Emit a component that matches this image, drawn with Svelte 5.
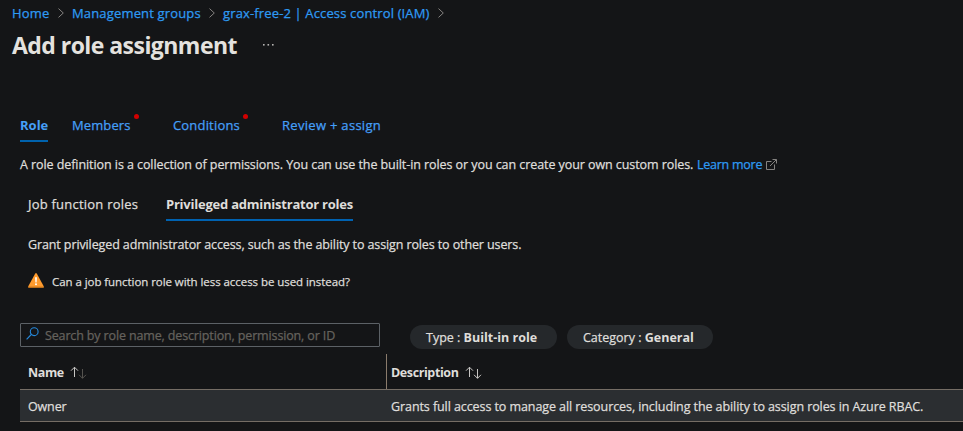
<script>
  const crumbs = [
    { label: 'Home', width: 38 },
    { label: 'Management groups', width: 129 },
    { label: 'grax-free-2 | Access control (IAM)', width: 207 }
  ];
</script>

{#snippet sort(dim)}
  <svg class="sort" width="17" height="13" viewBox="0 0 17 13" fill="none" stroke="#c8c6c4" stroke-width="1">
    <path d="M4.5 11V1.2M1 4.7 4.5 1.2 8 4.7" />
    <path d="M12.5 3V12.3M9 8.8l3.5 3.5L16 8.8" stroke={dim ? '#55534f' : '#c8c6c4'} />
  </svg>
{/snippet}

<main>
  <nav class="crumbs">
    {#each crumbs as crumb, i}
      <a class="crumb c{i}" style:width="{crumb.width}px">{crumb.label}</a>
      <svg class="chev" width="6" height="10" viewBox="0 0 6 10" fill="none" stroke="#858381"><path d="M.5.6 5.3 5 .5 9.4" /></svg>
    {/each}
  </nav>

  <header>
    <h1>Add role assignment</h1>
    <svg width="13" height="4" viewBox="0 0 13 4" fill="#b5b3b1"><rect x="1" y="1" width="1.6" height="1.6" /><rect x="5.5" y="1" width="1.6" height="1.6" /><rect x="10" y="1" width="1.6" height="1.6" /></svg>
  </header>

  <div class="tabs">
    <span class="tab role">Role</span>
    <span class="tab members">Members<i></i></span>
    <span class="tab conditions">Conditions<i></i></span>
    <span class="tab review">Review + assign</span>
  </div>

  <p class="intro">
    <span class="introtext">A role definition is a collection of permissions. You can use the built-in roles or you can create your own custom roles.</span>
    <a class="learn">Learn more</a>
    <svg width="11" height="11" viewBox="0 0 11 11" fill="none" stroke="#858381"><path d="M5.5 2.5h-5v8h8v-5M6.5.5h4v4M10.3.7 4 7" /></svg>
  </p>

  <div class="subtabs">
    <span class="job">Job function roles</span>
    <span class="priv">Privileged administrator roles</span>
  </div>

  <p class="grant">Grant privileged administrator access, such as the ability to assign roles to other users.</p>

  <div class="warning">
    <svg width="16" height="15" viewBox="0 0 16 15"><path d="M7.1.7Q8-.6 8.9.7L15.7 13.2Q16.2 14.7 15 14.7H1Q-.2 14.7.3 13.2Z" fill="#ff9b2e" /><path d="M.4 14.2h15.2" stroke="#b86a18" /><path d="M7.1 4.3h1.8L8.6 9.4H7.4Z" fill="#fff" /><circle cx="8" cy="11.3" r="1" fill="#fff" /></svg>
    <span>Can a job function role with less access be used instead?</span>
  </div>

  <div class="filters">
    <div class="search">
      <svg width="13" height="13" viewBox="0 0 13 13" fill="none" stroke="#2589dc" stroke-width="1.1"><circle cx="8.2" cy="4.7" r="3.9" /><path d="M5.3 7.5.6 12.3" /></svg>
      <span>Search by role name, description, permission, or ID</span>
    </div>
    <div class="pill type"><span>Type : <b>Built-in role</b></span></div>
    <div class="pill category"><span>Category : <b>General</b></span></div>
  </div>

  <div class="table">
    <div class="thead">
      <div class="th name"><span>Name</span>{@render sort(true)}</div>
      <div class="th desc"><span>Description</span>{@render sort(false)}</div>
    </div>
    <div class="row">
      <span class="owner">Owner</span>
      <span class="grants">Grants full access to manage all resources, including the ability to assign roles in Azure RBAC.</span>
    </div>
  </div>
</main>

<style>
  :global(body) { background: #141517; }
  main {
    width: 963px; height: 431px; overflow: hidden; background: #141517; color: #dfddda;
    font: 400 12.5px/18px "Open Sans", "Noto Sans", sans-serif; white-space: nowrap;
    -webkit-text-stroke: 0.25px currentColor;
  }
  p, h1 { margin: 0; }
  svg { flex: none; display: block; }
  .crumbs { display: flex; align-items: center; height: 26px; padding-left: 12px; gap: 8px; font-size: 13px; color: #2e9af3; }
  .c0 { letter-spacing: 0.2px; }
  .c1 { letter-spacing: 0.16px; }
  .c2 { letter-spacing: 0.14px; }
  header { display: flex; align-items: center; height: 38px; padding-left: 12px; }
  h1 { width: 225px; margin-right: 25px; font-size: 23px; line-height: 32px; font-weight: 700; letter-spacing: -0.55px; color: #e4e2df; -webkit-text-stroke: 0; }
  .tabs { display: flex; height: 33px; margin-top: 45px; padding-left: 20px; font-size: 13px; line-height: 33px; color: #459ff8; }
  .tab { position: relative; box-sizing: border-box; }
  .tab i { position: absolute; top: 5px; right: -9px; width: 5px; height: 5px; border-radius: 50%; background: #d10000; }
  .role { width: 28px; margin-right: 24px; border-bottom: 2px solid #0062ad; font-weight: 700; -webkit-text-stroke: 0; }
  .members { width: 58px; margin-right: 43px; letter-spacing: 0.1px; }
  .conditions { width: 66px; margin-right: 43px; letter-spacing: 0.18px; }
  .review { letter-spacing: 0.3px; }
  .intro { display: flex; align-items: center; height: 20px; margin-top: 13px; padding-left: 20px; letter-spacing: -0.072px; }
  .intro svg { margin-top: -2px; }
  .introtext { width: 673px; margin-right: 4px; }
  .learn { width: 65px; margin-right: 4px; color: #2e9af3; letter-spacing: -0.25px; }
  .subtabs { display: flex; height: 33px; margin-top: 13px; padding-left: 28px; line-height: 32px; font-size: 13px; }
  .job { width: 110px; margin-right: 28px; letter-spacing: 0.22px; }
  .priv { box-sizing: border-box; width: 187px; border-bottom: 2px solid #0062b1; font-weight: 700; letter-spacing: -0.23px; -webkit-text-stroke: 0; }
  .grant { height: 18px; margin-top: 15px; padding-left: 28px; letter-spacing: -0.11px; }
  .warning { display: flex; align-items: center; gap: 8px; height: 20px; margin-top: 17px; padding-left: 28px; font-size: 11.5px; letter-spacing: -0.06px; }
  .warning svg { margin-top: -2px; }
  .warning span { padding-top: 1px; }
  .filters { display: flex; height: 26px; margin-top: 32px; padding-left: 20px; }
  .search { display: flex; box-sizing: border-box; width: 360px; height: 24px; margin-right: 30px; padding-left: 5px; gap: 6px; border: 1px solid #5c6166; border-radius: 1px; color: #65625d; line-height: 24px; letter-spacing: -0.14px; }
  .search svg { margin-top: 3px; }
  .pill { box-sizing: border-box; height: 24px; margin-top: 2px; padding-left: 16px; border-radius: 12px; background: #25282b; line-height: 25px; letter-spacing: 0; }
  .pill b { font-weight: 700; -webkit-text-stroke: 0; }
  .type { width: 147px; margin-right: 10px; }
  .category { width: 146px; }
  .table { margin: 5px 0 0 20px; }
  .thead { display: flex; height: 35px; border-bottom: 1px solid #756d65; font-weight: 700; letter-spacing: -0.4px; -webkit-text-stroke: 0; }
  .th { display: flex; align-items: center; box-sizing: border-box; padding-top: 2px; }
  .th span { margin-right: 7px; }
  .name { width: 366px; padding-left: 8px; }
  .name span { width: 35px; }
  .desc { padding-left: 4px; border-left: 1px solid #8a7b6c; }
  .desc span { width: 67px; }
  .row { display: flex; align-items: center; box-sizing: border-box; height: 32px; padding: 2px 0 0 8px; border-bottom: 1px solid #756d65; background: #2b2e31; }
  .owner { width: 363px; letter-spacing: -0.15px; }
  .grants { letter-spacing: -0.08px; }
</style>
